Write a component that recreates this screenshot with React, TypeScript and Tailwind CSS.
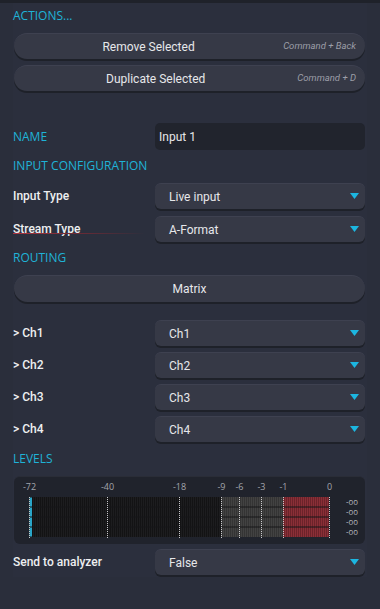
import React from 'react';

const FONT = { fontFamily: '"Open Sans", "Noto Sans", sans-serif' };
const BODY = { fontFamily: 'Roboto, "Open Sans", sans-serif' };

function SectionLabel({ text }: { text: string }) {
  return (
    <div className="h-[26px] flex items-center text-[12px] font-medium text-[#1fb3d7] leading-none">{text}</div>
  );
}

function PillButton({ label, shortcut }: { label: string; shortcut?: string }) {
  return (
    <div className="h-[26px] ml-px rounded-full bg-[#363946] border-t border-[#3e4150] shadow-[0_2px_0_#1e2129] flex items-center pr-[9px]" style={BODY}>
      <span className="flex-1 text-center text-[12px] text-[#e6e7ea]">{label}</span>
      {shortcut && <span className="text-[9.5px] italic text-[#9c9ea8]">{shortcut}</span>}
    </div>
  );
}

function Dropdown({ value }: { value: string }) {
  return (
    <div className="w-[210px] h-[26px] rounded-[6px] bg-[#363946] border-t border-[#3e4150] shadow-[0_2px_0_#1e2129] flex items-center justify-between pl-[14px] pr-[6px]" style={BODY}>
      <span className="text-[12px] text-[#e6e7ea]">{value}</span>
      <svg width="9" height="7" viewBox="0 0 9 7">
        <path d="M0 0 H9 L4.5 6 Z" fill="#1cb6e0" />
      </svg>
    </div>
  );
}

function FieldRow({ label, children, underline }: { label: string; children: React.ReactNode; underline?: boolean }) {
  return (
    <div className="flex items-center h-[26px]">
      <div className="w-[142px] relative -mt-[2px]" style={BODY}>
        <span className="text-[12px] font-medium text-[#eeeff1]">{label}</span>
        {underline && (
          <div className="absolute left-0 top-[17px] w-[132px] h-px bg-gradient-to-r from-[#b0343f] via-[#6a2a35] to-transparent" />
        )}
      </div>
      {children}
    </div>
  );
}

function Meter() {
  const lines = [15, 93, 165, 207, 225, 247, 269, 315];
  const labels: [string, number][] = [
    ['-72', 15], ['-40', 93], ['-18', 165], ['-9', 207], ['-6', 225], ['-3', 247], ['-1', 269], ['0', 315],
  ];
  const rows = [20, 30, 40, 50];
  return (
    <div className="ml-px h-[68px] rounded-[6px] bg-[#20232c] border-t border-[#2a2d37]">
      <svg width="351" height="68" viewBox="0 0 351 68" style={FONT}>
        <defs>
          <pattern id="stripeDark" width="2" height="10" patternUnits="userSpaceOnUse">
            <rect width="2" height="10" fill="#1d1d1f" />
            <rect width="1" height="10" fill="#131314" />
          </pattern>
          <pattern id="stripeGray" width="2" height="10" patternUnits="userSpaceOnUse">
            <rect width="2" height="10" fill="#424242" />
            <rect width="1" height="10" fill="#343434" />
          </pattern>
          <pattern id="stripeRed" width="2" height="10" patternUnits="userSpaceOnUse">
            <rect width="2" height="10" fill="#8a2f37" />
            <rect width="1" height="10" fill="#6c232a" />
          </pattern>
        </defs>
        <rect x="15" y="20" width="192" height="40" fill="url(#stripeDark)" />
        <rect x="207" y="20" width="62" height="40" fill="url(#stripeGray)" />
        <rect x="269" y="20" width="46" height="40" fill="url(#stripeRed)" />
        {rows.slice(1).map((y) => (
          <rect key={y} x="15" y={y - 0.5} width="300" height="1" fill="#161618" />
        ))}
        {rows.map((y) => (
          <rect key={'c' + y} x="15.5" y={y + 0.5} width="2.5" height="9" fill="#2aa6c8" />
        ))}
        {lines.map((x) => (
          <line key={x} x1={x + 0.5} y1="20" x2={x + 0.5} y2="61" stroke="#c9c9cc" strokeWidth="1" strokeDasharray="1 1" />
        ))}
        {labels.map(([t, x]) => (
          <text key={t} x={x + 0.5} y="13" fontSize="9" fill="#a3a5ad" textAnchor="middle">
            {t}
          </text>
        ))}
        {rows.map((y) => (
          <text
            key={'o' + y}
            x="332"
            y={y + 7.5}
            fontSize="8.5"
            fill="#b4b6bd"
            textLength="12"
            lengthAdjust="spacingAndGlyphs"
          >
            -oo
          </text>
        ))}
      </svg>
    </div>
  );
}

export default function App() {
  return (
    <div className="w-[380px] h-[609px] bg-[#2a2e3b] overflow-hidden" style={FONT}>
      <div className="h-[3px] bg-[#1f222a]" />
      <div className="ml-[13px] w-[354px] pr-[2px] bg-[#2b2f3d] pb-[1px]">
        <SectionLabel text="ACTIONS..." />
        <div className="mt-[4px] flex flex-col gap-[6px]">
          <PillButton label="Remove Selected" shortcut="Command + Back" />
          <PillButton label="Duplicate Selected" shortcut="Command + D" />
        </div>

        <div className="mt-[32px] flex items-center h-[27px]">
          <div className="w-[142px] text-[12px] font-medium text-[#1fb3d7]">NAME</div>
          <div className="w-[210px] h-[27px] rounded-[5px] bg-[#21242d] flex items-center pl-[4px]" style={BODY}>
            <span className="text-[12px] text-[#e6e7ea]">Input 1</span>
          </div>
        </div>

        <div className="mt-[3px]">
          <SectionLabel text="INPUT CONFIGURATION" />
        </div>
        <div className="mt-[4px] flex flex-col gap-[7px]">
          <FieldRow label="Input Type">
            <Dropdown value="Live input" />
          </FieldRow>
          <FieldRow label="Stream Type" underline>
            <Dropdown value="A-Format" />
          </FieldRow>
        </div>

        <div className="mt-[3px]">
          <SectionLabel text="ROUTING" />
        </div>
        <div className="mt-[4px]">
          <div className="h-[27px] ml-px rounded-full bg-[#363946] border-t border-[#3e4150] shadow-[0_2px_0_#1e2129] flex items-center justify-center" style={BODY}>
            <span className="text-[12px] text-[#e6e7ea]">Matrix</span>
          </div>
        </div>

        <div className="mt-[18px] flex flex-col gap-[6px]">
          {['Ch1', 'Ch2', 'Ch3', 'Ch4'].map((ch) => (
            <FieldRow key={ch} label={`> ${ch}`}>
              <Dropdown value={ch} />
            </FieldRow>
          ))}
        </div>

        <div className="mt-[4px]">
          <SectionLabel text="LEVELS" />
        </div>
        <div className="mt-[4px]">
          <Meter />
        </div>

        <div className="mt-[5px] mb-[1px]">
          <FieldRow label="Send to analyzer">
            <Dropdown value="False" />
          </FieldRow>
        </div>
      </div>
    </div>
  );
}
